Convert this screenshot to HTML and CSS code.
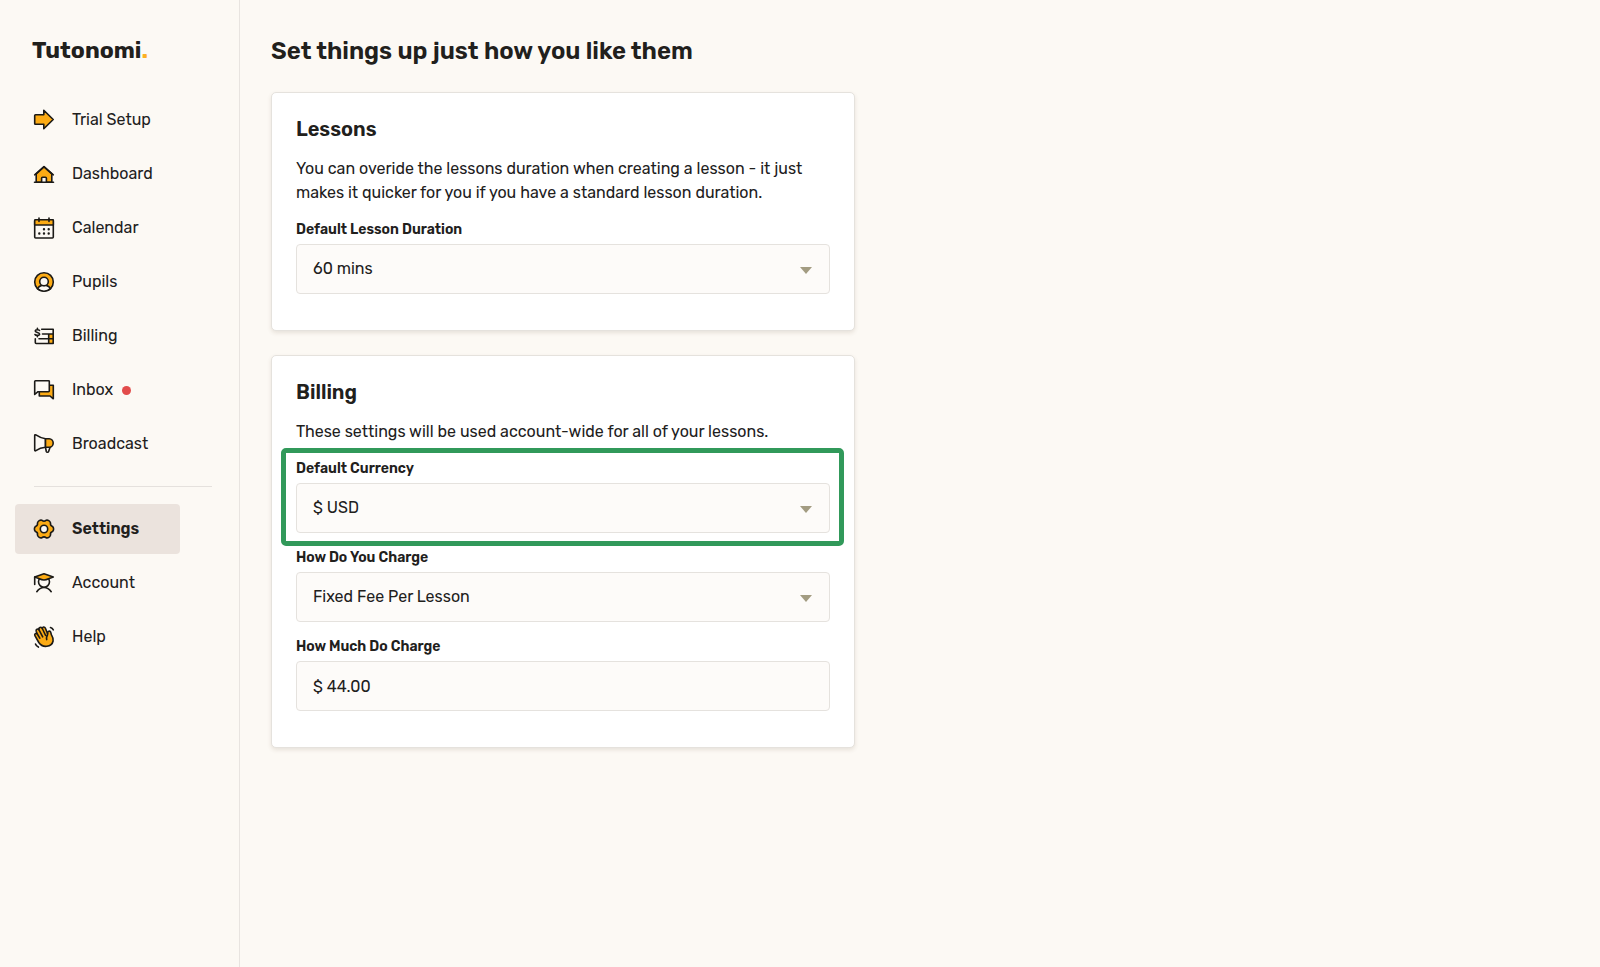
FILE: index.html
```html
<!DOCTYPE html>
<html lang="en">
<head>
    <meta charset="UTF-8">
    <meta name="viewport" content="width=device-width, initial-scale=1.0">
    <title>Settings - Tutonomi</title>
    <link rel="stylesheet" href="styles.css">
</head>
<body>
    <aside class="sidebar">
        <a href="#" class="logo">Tutonomi<span>.</span></a>
        <nav class="nav">
            <a href="#">
                <svg class="icon" viewBox="0 0 22 22">
                    <path class="amber" d="M2.5 5.7h8.3V1.3l9.4 9.2-9.4 9.2v-4.4H2.5a.8.8 0 0 1-.8-.8v-8a.8.8 0 0 1 .8-.8z"/>
                </svg>
                Trial Setup
            </a>
            <a href="#">
                <svg class="icon" viewBox="0 0 22 22">
                    <path class="amber" d="M3.2 19.2V10.8L11 3.8l7.8 7v8.4z"/>
                    <path class="white" d="M8.6 19.2v-4a1 1 0 0 1 1-1h2.8a1 1 0 0 1 1 1v4"/>
                    <path d="M1.7 11.8L11 3.5l9.3 8.3M1.5 19.3h19"/>
                </svg>
                Dashboard
            </a>
            <a href="#">
                <svg class="icon" viewBox="0 0 22 22">
                    <rect class="white" x="1.7" y="2.7" width="18.6" height="18.3" rx="1"/>
                    <path class="amber" d="M1.7 8V3.5a.8.8 0 0 1 .8-.8h17a.8.8 0 0 1 .8.8V8z"/>
                    <path d="M6 1v3.5M16 1v3.5"/>
                    <path class="dots" d="M11 12.3h0M15.7 12.3h0M6.3 16.5h0M11 16.5h0M15.7 16.5h0"/>
                </svg>
                Calendar
            </a>
            <a href="#">
                <svg class="icon" viewBox="0 0 22 22">
                    <circle class="amber" cx="11" cy="11" r="9.3"/>
                    <path class="white" d="M4.5 17.6c1-1.8 2.5-2.8 4.3-3.2h4.4c1.8.4 3.3 1.4 4.3 3.2A9.3 9.3 0 0 1 4.5 17.6z"/>
                    <circle class="white" cx="11" cy="10.5" r="4.3"/>
                </svg>
                Pupils
            </a>
            <a href="#">
                <svg class="icon" viewBox="0 0 22 22">
                    <path class="fill" d="M15.7 9h5v9.5h-5z"/>
                    <path d="M6.5 5.5C6 4.5 2.2 4.2 2.2 6c0 1.9 4.4 1 4.4 3 0 1.8-3.9 1.6-4.6.5M4.4 3.2v1.3M4.4 10.5v1.3"/>
                    <path d="M8.7 4.3h11.5v14.2H3.2a.9.9 0 0 1-.9-.9v-3.8M9.5 9h10.7M6 13.8h14.2M15.7 9v9.5"/>
                </svg>
                Billing
            </a>
            <a href="#">
                <svg class="icon" viewBox="0 0 22 22">
                    <path class="amber" d="M16 6.3h4.3v13.5L17 17H6.3v-4.3z"/>
                    <path class="white" d="M2.5 1.7h13a.8.8 0 0 1 .8.8v9.4a.8.8 0 0 1-.8.8H5l-3.3 2.8v-13a.8.8 0 0 1 .8-.8z"/>
                </svg>
                Inbox
                <span class="unread"></span>
            </a>
            <a href="#">
                <svg class="icon" viewBox="0 0 22 22">
                    <path class="white" d="M12.5 14.3l.8 4.2c.3 1 2 1 2.3 0l1.5-4.2z"/>
                    <path class="white" d="M1.7 2.5c0-.8.6-1 1.2-.6 3 2.1 6 3.3 9.6 3.8v8.6c-3.6.3-6.6 1.3-9.6 3.4-.6.4-1.2.2-1.2-.6z"/>
                    <path class="amber" d="M12.5 5.7h3.7a4 4.3 0 0 1 0 8.6h-3.7z"/>
                </svg>
                Broadcast
            </a>
            <hr>
            <a href="#" class="active">
                <svg class="icon" viewBox="0 0 22 22">
                    <path class="amber" d="M19.5 8.4A3.6 3.6 0 0 1 19.5 13.6Q17 14.4 17.5 17.1A3.6 3.6 0 0 1 13 19.7Q11 17.9 9 19.7A3.6 3.6 0 0 1 4.5 17.1Q5 14.4 2.5 13.6A3.6 3.6 0 0 1 2.5 8.4Q5 7.6 4.5 4.9A3.6 3.6 0 0 1 9 2.3Q11 4.1 13 2.3A3.6 3.6 0 0 1 17.5 4.9Q17 7.6 19.5 8.4z"/>
                    <circle class="white" cx="11" cy="11" r="3.7"/>
                </svg>
                Settings
            </a>
            <a href="#">
                <svg class="icon" viewBox="0 0 22 22">
                    <circle class="white" cx="11" cy="9.8" r="5.5"/>
                    <path class="amber" d="M1.7 5L11 1.8 20.3 5 15.5 6.8Q11 9.2 6.5 6.8z"/>
                    <path d="M1.7 5v7.5M3.8 19.7c1.7-2.5 4.3-4.2 7.2-4.2s5.5 1.7 7.2 4.2"/>
                </svg>
                Account
            </a>
            <a href="#">
                <svg class="icon" viewBox="0 0 22 22">
                    <path class="amber" d="M5.8 16.5L1.9 9.7C1.1 7.8 3 6.6 4.3 8L3.2 5.3C2.5 3.3 4.9 2.1 6 3.9 5.3 1.4 8.3.3 9.3 2.5 9.3.7 11.6.4 12.3 2L14.6 7.6C14.6 5.6 15.8 4.7 17 5.3 18.2 6 17.8 7.6 18.6 9.2 20 11.5 20.5 13 20.1 15 18.8 21.2 9.6 22.4 5.8 16.5z"/>
                    <path d="M4.3 8l2.5 4.2M6 3.9l3.7 7M9.3 2.5l3.3 7M14.6 7.6c.5 2.1-1.9 3-.9 6M17.5 1.5c1.3.4 2.2 1.2 2.8 2.4M2.5 18c.5 1.5 1.5 2.5 2.9 3.1"/>
                </svg>
                Help
            </a>
        </nav>
    </aside>

    <main class="content">
        <h1>Set things up just how you like them</h1>

        <section class="card">
            <h2>Lessons</h2>
            <p>You can overide the lessons duration when creating a lesson - it just makes it quicker for you if you have a standard lesson duration.</p>
            <div class="field">
                <label for="duration">Default Lesson Duration</label>
                <div class="select">
                    <select id="duration">
                        <option>60 mins</option>
                    </select>
                </div>
            </div>
        </section>

        <section class="card">
            <h2>Billing</h2>
            <p>These settings will be used account-wide for all of your lessons.</p>
            <div class="field highlight">
                <label for="currency">Default Currency</label>
                <div class="select">
                    <select id="currency">
                        <option>$ USD</option>
                    </select>
                </div>
            </div>
            <div class="field">
                <label for="charge">How Do You Charge</label>
                <div class="select">
                    <select id="charge">
                        <option>Fixed Fee Per Lesson</option>
                    </select>
                </div>
            </div>
            <div class="field">
                <label for="amount">How Much Do Charge</label>
                <input type="text" id="amount" value="$ 44.00">
            </div>
        </section>
    </main>
</body>
</html>
```

FILE: styles.css
```css
* {
    box-sizing: border-box;
}
body {
    margin: 0;
    display: flex;
    min-height: 100vh;
    background-color: #fcf9f4;
    color: #21201c;
    font-family: Rubik, Roboto, sans-serif;
    font-size: 16px;
    line-height: 24px;
}

/* sidebar */
.sidebar {
    flex: none;
    width: 240px;
    padding: 34px 27px 0 15px;
    border-right: 1px solid #e8e4e0;
}
.logo {
    display: block;
    margin-left: 17px;
    color: #21201c;
    font-size: 23px;
    font-weight: 700;
    line-height: 32px;
    text-decoration: none;
}
.logo span {
    color: #fcb022;
}
.nav {
    display: flex;
    flex-direction: column;
    gap: 4px;
    margin-top: 29px;
}
.nav a {
    display: flex;
    align-items: center;
    gap: 17px;
    width: 165px;
    height: 50px;
    padding-left: 18px;
    border-radius: 4px;
    color: #21201c;
    text-decoration: none;
}
.nav a.active {
    background-color: #ebe3dd;
    font-weight: 600;
}
.nav hr {
    align-self: stretch;
    margin: 13px 0 13px 19px;
    border: none;
    border-top: 1px solid #e5e1dd;
}
.unread {
    width: 9px;
    height: 9px;
    margin-left: -8px;
    border-radius: 50%;
    background-color: #e24c4b;
}

/* icons */
.icon {
    flex: none;
    width: 22px;
    height: 22px;
    overflow: visible;
    fill: none;
    stroke: #1b1a17;
    stroke-width: 1.6;
    stroke-linecap: round;
    stroke-linejoin: round;
}
.icon .amber {
    fill: #fcab14;
}
.icon .fill {
    fill: #fcab14;
    stroke: none;
}
.icon .white {
    fill: #fcf9f4;
}
.icon .dots {
    stroke-width: 2.4;
}

/* content */
.content {
    flex: 1;
    padding: 35px 31px;
}
h1 {
    margin: 0 0 25px;
    font-size: 24px;
    font-weight: 600;
    line-height: 32px;
}
.card {
    max-width: 584px;
    margin-bottom: 24px;
    padding: 24px 24px 22px;
    border: 1px solid #e5e2dd;
    border-radius: 5px;
    background-color: #fff;
    box-shadow: 0 2px 4px rgba(80, 60, 30, 0.12);
}
h2 {
    margin: 0 0 16px;
    font-size: 20px;
    font-weight: 600;
    line-height: 24px;
}
p {
    margin: 0 0 15px;
}
.field {
    position: relative;
    margin-bottom: 15px;
}
.field:last-child {
    margin-bottom: 14px;
}
label {
    display: block;
    margin-bottom: 4px;
    font-size: 14px;
    font-weight: 600;
    line-height: 20px;
}
select,
input {
    display: block;
    width: 100%;
    height: 50px;
    padding: 0 16px;
    border: 1px solid #e5e2de;
    border-radius: 4px;
    background-color: #fdfbf9;
    color: #21201c;
    font: inherit;
    appearance: none;
}
.select {
    position: relative;
}
.select::after {
    content: "";
    position: absolute;
    top: 23px;
    right: 18px;
    border: 6px solid transparent;
    border-top: 7px solid #a39c82;
    border-bottom: 0;
    pointer-events: none;
}
.highlight::after {
    content: "";
    position: absolute;
    inset: -11px -14px -13px -15px;
    border: 5px solid #31995a;
    border-radius: 5px;
    pointer-events: none;
}
```
